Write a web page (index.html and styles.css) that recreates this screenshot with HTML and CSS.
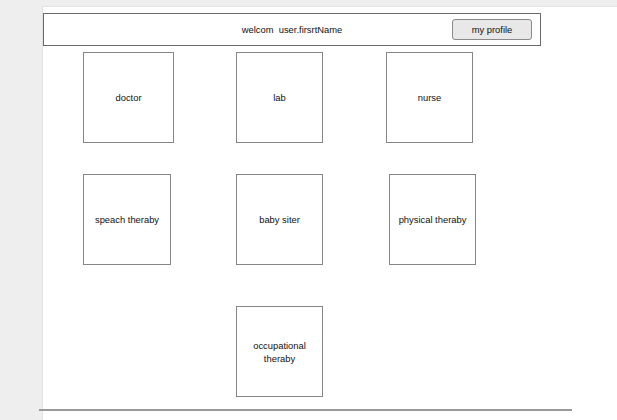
FILE: index.html
```html
<!DOCTYPE html>
<html>
<head>
<meta charset="utf-8">
<link rel="stylesheet" href="styles.css">
</head>
<body>
<div class="canvas">
  <div class="header">
    <span class="spacer"></span>
    <span class="welcome">welcom &nbsp;user.firsrtName</span>
    <button class="profile">my profile</button>
  </div>
  <div class="rows">
    <div class="row row-1">
      <div class="card c-doctor">doctor</div>
      <div class="card c-lab">lab</div>
      <div class="card c-nurse">nurse</div>
    </div>
    <div class="row row-2">
      <div class="card c-speach">speach theraby</div>
      <div class="card c-baby">baby siter</div>
      <div class="card c-physical">physical theraby</div>
    </div>
    <div class="row row-3">
      <div class="card c-occ">occupational<br>theraby</div>
    </div>
  </div>
  <div class="rule"></div>
</div>
</body>
</html>
```

FILE: styles.css
```css
html, body {
  margin: 0;
  padding: 0;
}
body {
  background: #eeeeee;
  height: 420px;
  overflow: hidden;
  font-family: "Liberation Sans", Arial, sans-serif;
  font-size: 9.4px;
  color: #111;
}
.canvas {
  margin-left: 42px;
  margin-top: 6px;
  background: #ffffff;
  border-top: 1px solid #e2e2e2;
  border-left: 1px solid #e2e2e2;
  padding-top: 6px;
  height: 420px;
}
.header {
  box-sizing: border-box;
  width: 498px;
  height: 33px;
  border: 1px solid #6a6a6a;
  display: grid;
  grid-template-columns: 1fr auto 1fr;
  align-items: center;
}
.welcome {
  white-space: nowrap;
}
.profile {
  justify-self: end;
  margin-right: 8px;
  box-sizing: border-box;
  width: 80px;
  height: 21px;
  background: #e8e8e8;
  border: 1px solid #8a8a8a;
  border-radius: 3px;
  font-family: "Liberation Sans", Arial, sans-serif;
  font-size: 9.4px;
  color: #111;
  padding: 0;
}
.rows {
  padding-left: 40px;
  margin-top: 6px;
}
.row {
  display: flex;
}
.row-2 { margin-top: 31px; }
.row-3 { margin-top: 41px; }
.card {
  box-sizing: border-box;
  height: 91px;
  width: 87px;
  border: 1px solid #858585;
  display: flex;
  align-items: center;
  justify-content: center;
  text-align: center;
  line-height: 13px;
}
.c-doctor { width: 91px; }
.c-lab { margin-left: 62px; }
.c-nurse { margin-left: 63px; }
.c-speach { width: 88px; }
.c-baby { margin-left: 65px; }
.c-physical { margin-left: 66px; }
.c-occ { margin-left: 153px; }
.rule {
  margin-top: 12px;
  margin-left: -4px;
  width: 533px;
  height: 2px;
  background: #9a9a9a;
}
```
